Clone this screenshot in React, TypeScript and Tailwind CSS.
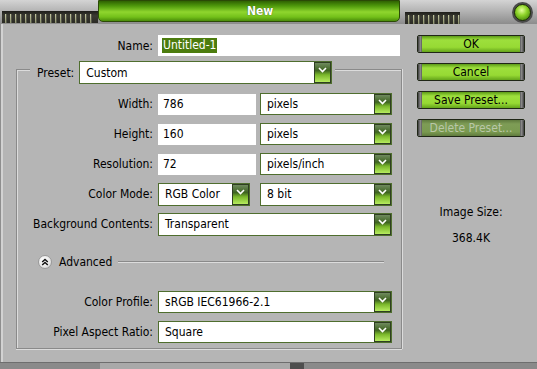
import React from "react";

const F = "font-['DejaVu_Sans_Condensed','DejaVu_Sans',sans-serif]";

function Chevron() {
  return (
    <svg width="9" height="6" viewBox="0 0 9 6" className="mt-[4px]">
      <path d="M1 1 L4.5 4.5 L8 1" fill="none" stroke="#ffffff" strokeWidth="1.6" />
    </svg>
  );
}

function DropBtn() {
  return (
    <div className="w-[17px] shrink-0 border border-[#2f3f22] bg-[linear-gradient(#6f8a5e_0%,#3e6420_40%,#79b62a_62%,#b6ec5e_100%)] flex justify-center">
      <Chevron />
    </div>
  );
}

function Select({ value, w, h = 22 }: { value: string; w: string; h?: number }) {
  return (
    <div className={`${w} flex border border-[#4f6e2e] bg-white`} style={{ height: h }}>
      <span className="flex-1 pl-[6px] flex items-center text-[12px] text-black whitespace-nowrap overflow-hidden">
        {value}
      </span>
      <DropBtn />
    </div>
  );
}

function Field({ value }: { value: string }) {
  return (
    <div className="w-[98px] h-[21px] bg-white pl-[5px] flex items-center text-[12px] text-black">
      {value}
    </div>
  );
}

function Row({ label, children }: { label: string; children: React.ReactNode }) {
  return (
    <div className="flex items-center h-[22px]">
      <div className="w-[136px] text-right text-[12px] text-black whitespace-nowrap">{label}</div>
      <div className="ml-[5px] flex items-center gap-[4px]">{children}</div>
    </div>
  );
}

function Btn({ label, disabled = false }: { label: string; disabled?: boolean }) {
  return (
    <div className="w-[108px] h-[18px] flex border border-[#1f2616] rounded-[2px] overflow-hidden">
      <div className="w-[4px] bg-[linear-gradient(90deg,#3c3c3c,#8a8a8a_60%,#5a5a5a)]" />
      <div
        className={`flex-1 flex items-center justify-center text-[12px] ${
          disabled
            ? "bg-[linear-gradient(#5f7a3e_0%,#7e9c56_25%,#7a9a50_75%,#5f7a3e_100%)] text-[#b9c7a8]"
            : "bg-[linear-gradient(#5c9a18_0%,#9ddf3c_25%,#97da34_70%,#64a41a_100%)] text-black"
        }`}
      >
        {label}
      </div>
      <div className="w-[4px] bg-[linear-gradient(90deg,#5a5a5a,#8a8a8a_40%,#3c3c3c)]" />
    </div>
  );
}

function Ridges({ n }: { n: number }) {
  return (
    <div className="flex h-[12px] bg-[linear-gradient(#1e1e1a,#3a3a32_40%,#2a2a24)]">
      {Array.from({ length: n }).map((_, i) => (
        <div key={i} className="w-[5px] h-full flex">
          <div className="w-[3px]" />
          <div className="w-[1px] mt-[3px] bg-[linear-gradient(#c4c8a0,#8a8e6a)]" />
          <div className="w-[1px] mt-[3px] bg-[#55574a]" />
        </div>
      ))}
    </div>
  );
}

export default function App() {
  return (
    <div className={`${F} w-[537px] h-[369px] overflow-hidden flex flex-col bg-[#b5b5b5]`}>
      {/* Title bar */}
      <div className="h-[24px] flex shrink-0 bg-[linear-gradient(#d4d4d4,#b4b4b4_45%,#8c8c8c)]">
        <div className="w-[98px] flex flex-col">
          <div className="h-[11px]" />
          <div className="ml-[2px]">
            <Ridges n={18} />
          </div>
        </div>
        <div className="w-[302px] h-[22px] rounded-b-[5px] border border-[#2b4a06] bg-[linear-gradient(#2f6202_0%,#4f9a0c_25%,#8fd62e_55%,#73c01a_80%,#4a8c0a_100%)] flex items-center pl-[148px]">
          <span className="text-white font-bold text-[12px] [text-shadow:0_0_1px_#1a3a00]">New</span>
        </div>
        <div className="flex-1 flex items-start">
          <div className="mt-[12px] ml-[5px]">
            <Ridges n={11} />
          </div>
          <div className="flex-1" />
          <div className="mt-[2px] mr-[4px] w-[21px] h-[21px] rounded-full bg-[#4a4a4a] p-[2px]">
            <div className="w-full h-full rounded-full border border-[#1e3006] bg-[radial-gradient(circle_at_45%_35%,#e4ff9a_0%,#8fd42a_40%,#3f7f06_90%)]" />
          </div>
        </div>
      </div>

      {/* Body */}
      <div className="flex-1 flex border-l border-[#8e8e8e] shadow-[inset_2px_0_0_#d2d2d2]">
        {/* left */}
        <div className="w-[402px] flex flex-col">
          <div className="mt-[11px] flex items-center h-[21px]">
            <div className="w-[152px] text-right text-[12px] text-black">Name:</div>
            <div className="ml-[5px] w-[242px] h-[21px] bg-white flex items-center pl-[4px]">
              <span className="bg-[#4c7c0e] text-white text-[12px] px-[1px] leading-[15px]">Untitled-1</span>
            </div>
          </div>

          {/* group */}
          <div className="mt-[5px] ml-[15px] w-[386px] flex flex-col">
            <div className="flex items-start h-[23px]">
              <div className="w-[14px] h-[15px] mt-[8px] border-l border-t border-[#8a8a8a] shadow-[inset_1px_1px_0_#dcdcdc]" />
              <div className="ml-[7px] h-[23px] flex items-center text-[12px] text-black">Preset:</div>
              <div className="ml-[5px]">
                <Select value="Custom" w="w-[253px]" h={23} />
              </div>
              <div className="ml-[3px] flex-1 h-[15px] mt-[8px] border-r border-t border-[#8a8a8a] shadow-[inset_0_1px_0_#dcdcdc,1px_0_0_#dcdcdc]" />
            </div>
            <div className="border-l border-r border-b border-[#8a8a8a] shadow-[inset_1px_0_0_#dcdcdc,1px_0_0_#dcdcdc,0_1px_0_#dcdcdc] pt-[9px] pb-[5px] flex flex-col">
              <div className="flex flex-col gap-[8px]">
                <Row label="Width:">
                  <Field value="786" />
                  <Select value="pixels" w="w-[132px]" />
                </Row>
                <Row label="Height:">
                  <Field value="160" />
                  <Select value="pixels" w="w-[132px]" />
                </Row>
                <Row label="Resolution:">
                  <Field value="72" />
                  <Select value="pixels/inch" w="w-[132px]" />
                </Row>
                <Row label="Color Mode:">
                  <div className="mr-[6px]">
                    <Select value="RGB Color" w="w-[92px]" h={23} />
                  </div>
                  <Select value="8 bit" w="w-[132px]" h={23} />
                </Row>
                <Row label="Background Contents:">
                  <Select value="Transparent" w="w-[234px]" h={23} />
                </Row>
              </div>

              <div className="mt-[20px] h-[14px] flex items-center">
                <div className="ml-[21px] w-[14px] h-[14px] rounded-full bg-[radial-gradient(circle_at_40%_35%,#ffffff,#e8e8e8_60%,#bdbdbd)] border border-[#9a9a9a] flex items-center justify-center">
                  <svg width="8" height="8" viewBox="0 0 8 8">
                    <path d="M1.2 4 L4 1.4 L6.8 4 M1.2 7 L4 4.4 L6.8 7" fill="none" stroke="#111" strokeWidth="1.4" />
                  </svg>
                </div>
                <span className="ml-[7px] text-[12px] text-black">Advanced</span>
                <div className="ml-[6px] mr-[17px] flex-1 h-[2px] border-t border-[#8a8a8a] border-b border-b-[#dcdcdc]" />
              </div>

              <div className="mt-[22px] flex flex-col gap-[8px]">
                <Row label="Color Profile:">
                  <Select value="sRGB IEC61966-2.1" w="w-[234px]" />
                </Row>
                <Row label="Pixel Aspect Ratio:">
                  <Select value="Square" w="w-[234px]" />
                </Row>
              </div>
            </div>
          </div>
        </div>

        {/* right */}
        <div className="flex-1 flex flex-col items-center pt-[11px] pl-[2px]">
          <div className="flex flex-col gap-[10px]">
            <Btn label="OK" />
            <Btn label="Cancel" />
            <Btn label="Save Preset..." />
            <Btn label="Delete Preset..." disabled />
          </div>
          <div className="mt-[66px] text-[12px] text-black">Image Size:</div>
          <div className="mt-[8px] text-[12px] text-black">368.4K</div>
        </div>
      </div>

      {/* bottom */}
      <div className="h-[7px] shrink-0 flex border-t border-[#6e6e6e]">
        <div className="w-[100px] bg-[#8a8a8a]" />
        <div className="w-[190px] bg-[#a9a9a9]" />
        <div className="w-[14px] bg-[#4e4e4e]" />
        <div className="flex-1 bg-[#8a8a8a]" />
      </div>
    </div>
  );
}
